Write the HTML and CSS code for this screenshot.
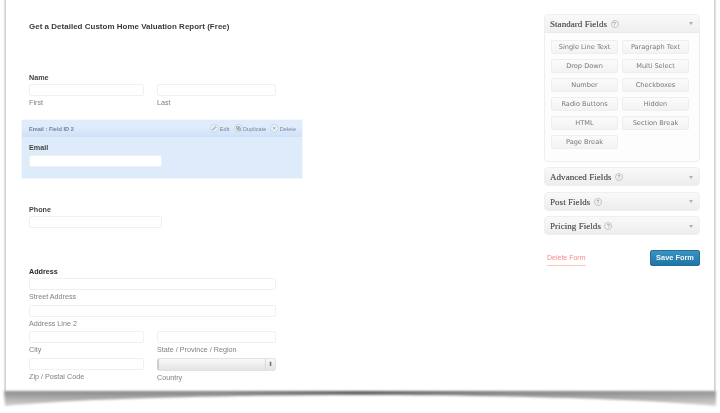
FILE: index.html
```html
<!DOCTYPE html>
<html lang="en">
<head>
<meta charset="utf-8">
<title>Form editor</title>
<link rel="stylesheet" href="styles.css">
</head>
<body>
<div class="sheet">
  <main class="form">
    <h1 class="title">Get a Detailed Custom Home Valuation Report (Free)</h1>
    <section class="field f-name">
      <div class="label">Name</div>
      <div class="pair">
        <div class="half"><div class="input"></div><div class="sub">First</div></div>
        <div class="half"><div class="input"></div><div class="sub">Last</div></div>
      </div>
    </section>
    <section class="selected">
      <div class="sel-head">
        <span class="sel-title">Email : Field ID 2</span>
        <span class="actions">
          <span class="action"><svg class="ai" viewBox="0 0 10 10"><circle cx="5" cy="5" r="4.5"/><path class="m" d="M3 7l.4-1.4L6.2 2.8l1 1L4.4 6.6z"/></svg>Edit</span>
          <span class="action"><svg class="ai" viewBox="0 0 10 10"><circle cx="5" cy="5" r="4.5"/><path class="m" d="M3 3h3v3H3zM4.5 4.5h3v3h-3z"/></svg>Duplicate</span>
          <span class="action"><svg class="ai" viewBox="0 0 10 10"><circle cx="5" cy="5" r="4.5"/><path class="m" d="M3.4 3.4l3.2 3.2M6.6 3.4L3.4 6.6"/></svg>Delete</span>
        </span>
      </div>
      <div class="sel-body">
        <div class="label">Email</div>
        <div class="input w-133"></div>
      </div>
    </section>
    <section class="field f-phone">
      <div class="label">Phone</div>
      <div class="input w-133"></div>
    </section>
    <section class="field f-address">
      <div class="label strong">Address</div>
      <div class="input full"></div>
      <div class="sub">Street Address</div>
      <div class="input full"></div>
      <div class="sub">Address Line 2</div>
      <div class="pair">
        <div class="half"><div class="input"></div><div class="sub">City</div></div>
        <div class="half"><div class="input"></div><div class="sub">State / Province / Region</div></div>
      </div>
      <div class="pair">
        <div class="half"><div class="input"></div><div class="sub">Zip / Postal Code</div></div>
        <div class="half"><div class="select"><span class="arrows">⬍</span></div><div class="sub">Country</div></div>
      </div>
    </section>
  </main>
  <aside class="side">
    <div class="panel open">
      <div class="p-head"><span class="p-title">Standard Fields</span><span class="help">?</span><span class="caret"></span></div>
      <div class="btns">
        <span class="btn">Single Line Text</span><span class="btn">Paragraph Text</span>
        <span class="btn">Drop Down</span><span class="btn">Multi Select</span>
        <span class="btn">Number</span><span class="btn">Checkboxes</span>
        <span class="btn">Radio Buttons</span><span class="btn">Hidden</span>
        <span class="btn">HTML</span><span class="btn">Section Break</span>
        <span class="btn">Page Break</span>
      </div>
    </div>
    <div class="panel"><div class="p-head"><span class="p-title">Advanced Fields</span><span class="help">?</span><span class="caret"></span></div></div>
    <div class="panel"><div class="p-head"><span class="p-title">Post Fields</span><span class="help">?</span><span class="caret"></span></div></div>
    <div class="panel"><div class="p-head"><span class="p-title">Pricing Fields</span><span class="help">?</span><span class="caret"></span></div></div>
    <div class="foot">
      <span class="del">Delete Form</span>
      <span class="save">Save Form</span>
    </div>
  </aside>
</div>
<svg class="shadow" viewBox="0 0 720 22" preserveAspectRatio="none" aria-hidden="true">
  <defs>
    <linearGradient id="sg" x1="0" x2="1" y1="0" y2="0">
      <stop offset="0" stop-color="#8c8c8c"/>
      <stop offset=".3" stop-color="#808080"/>
      <stop offset=".5" stop-color="#555"/>
      <stop offset=".72" stop-color="#808080"/>
      <stop offset="1" stop-color="#929292"/>
    </linearGradient>
    <linearGradient id="sv" gradientUnits="userSpaceOnUse" x1="0" x2="0" y1="0" y2="16">
      <stop offset="0" stop-color="#fff"/>
      <stop offset="1" stop-color="#555"/>
    </linearGradient>
    <mask id="sm"><rect width="720" height="22" fill="url(#sv)"/></mask>
  </defs>
  <path d="M4 0H716V15C650 8 500 4 360 4C220 4 70 8 5 15Z" fill="url(#sg)" mask="url(#sm)"/>
</svg>
</body>
</html>
```
FILE: styles.css
```css
html, body { margin: 0; padding: 0; background: #fff; }
body {
  width: 720px;
  height: 413px;
  overflow: hidden;
  position: relative;
  font-family: "Liberation Sans", Arial, sans-serif;
}
.sheet {
  width: 710px;
  height: 391px;
  margin-left: 5px;
  background: #fff;
  display: flex;
  box-sizing: border-box;
  border-left: 1px solid #d2d2d2;
  border-right: 1px solid #d2d2d2;
  box-shadow: -1px 0 1px #e2e2e2, 1px 0 1px #e2e2e2;
  filter: blur(.5px);
}
.form {
  width: 538px;
  height: 361px;
  overflow: hidden;
  flex: none;
  padding: 21px 0 0 23px;
}
.title { margin: 0; font-size: 7.95px; line-height: 11px; font-weight: bold; color: #3a3a3a; letter-spacing: .04px; }
.label { font-size: 7.2px; line-height: 10px; font-weight: bold; color: #444; height: 11px; }
.strong { color: #2c2c2c; height: 11px; }
.sub { font-size: 7.2px; line-height: 10px; color: #808080; margin-top: 2px; height: 11px; }
.input {
  height: 12px;
  width: 115px;
  box-sizing: border-box;
  background: #fff;
  border: 1px solid #f0f0f0;
  border-radius: 2px;
}
.w-133 { width: 133px; }
.full { width: 246.5px; }
.pair { display: flex; gap: 13px; }
.half { width: 115px; }
.half + .half { width: 118.5px; }
.half + .half .input { width: 118.5px; }
.f-name { margin-top: 41px; }
.selected {
  width: 280px;
  height: 58px;
  margin: 10.5px 0 0 -7px;
  background: #deebfb;
  box-shadow: 0 0 1px #c5d8ef;
}
.sel-head {
  height: 17px;
  box-sizing: border-box;
  padding: 1px 6px 0 7px;
  display: flex;
  justify-content: space-between;
  align-items: center;
  background: linear-gradient(#e0ecfc 40%, #cfe0f7);
  font-size: 5.6px;
  color: #76869a;
}
.sel-title { font-weight: bold; color: #738397; }
.actions { display: flex; gap: 4px; }
.action { display: flex; align-items: center; gap: 1px; }
.ai { width: 8.5px; height: 8.5px; }
.ai circle { fill: #f0f3f7; stroke: #c0cad5; stroke-width: .8; }
.ai .m { fill: none; stroke: #8a95a1; stroke-width: .9; }
.sel-body { padding: 6px 7px 0; }
.sel-body .label { height: 12.5px; }
.f-phone { margin-top: 27px; }
.f-address { margin-top: 39.5px; }
.f-address .sub { height: 12.5px; }
.select {
  width: 118.5px;
  height: 13px;
  box-sizing: border-box;
  border: 1px solid #e2e2e2;
  border-left: 2px solid #cfcfcf;
  border-radius: 3px;
  background: linear-gradient(#f8f8f8, #e4e4e4);
  position: relative;
}
.arrows {
  position: absolute;
  right: 0;
  top: 0;
  bottom: 0;
  width: 9px;
  border-left: 1px solid #dadada;
  font-size: 6px;
  line-height: 11px;
  text-align: center;
  color: #777;
}
.select + .sub { margin-top: 2px; }
.side { width: 156px; padding: 14px 0 0 0; margin-left: -23px; }
.panel {
  width: 156px;
  height: 19px;
  box-sizing: border-box;
  border: 1px solid #efefef;
  border-radius: 4px;
  background: linear-gradient(#f9f9f9, #ededed);
  margin-bottom: 5.5px;
}
.panel.open { height: 148px; background: #fdfdfd; margin-bottom: 5px; }
.p-head {
  height: 18px;
  box-sizing: border-box;
  display: flex;
  align-items: center;
  padding: 0 6px 0 5px;
  gap: 3.5px;
  font-family: "Liberation Serif", "DejaVu Serif", serif;
  font-size: 9px;
  color: #5a5a5a;
}
.open .p-head { background: linear-gradient(#f9f9f9, #efefef); border-bottom: 1px solid #ebebeb; border-radius: 3px 3px 0 0; }
.p-title { letter-spacing: .05px; text-shadow: 0 0 .4px #777; }
.help {
  width: 8px;
  height: 8px;
  box-sizing: border-box;
  border: 1px solid #c4c4c4;
  border-radius: 50%;
  font: 5px/6px "Liberation Sans", sans-serif;
  text-align: center;
  color: #888;
  background: #f3f3f3;
}
.caret {
  margin-left: auto;
  width: 0;
  height: 0;
  border: 2px solid transparent;
  border-top: 3px solid #b0b0b0;
  border-bottom: 0;
}
.btns {
  display: grid;
  grid-template-columns: 67px 67px;
  grid-auto-rows: 14px;
  gap: 5px 4px;
  padding: 7px 6px;
}
.btn {
  box-sizing: border-box;
  border: 1px solid #eeeeee;
  border-radius: 2px;
  background: linear-gradient(#fbfbfb, #f3f3f3);
  font: 6.6px/12px "DejaVu Sans", Verdana, sans-serif;
  color: #777;
  text-align: center;
  white-space: nowrap;
}
.foot {
  display: flex;
  justify-content: space-between;
  align-items: flex-start;
  margin-top: 15px;
}
.del {
  margin: 4px 0 0 3px;
  padding-bottom: 3px;
  font-size: 7px;
  line-height: 8px;
  color: #f68a8a;
  border-bottom: 1px solid #fac6c6;
}
.save {
  width: 50px;
  height: 16px;
  box-sizing: border-box;
  border: 1px solid #256f9b;
  border-radius: 2px;
  background: linear-gradient(#3a93c2, #1f75a6);
  color: #f2f8fb;
  font-size: 7.4px;
  font-weight: bold;
  line-height: 14px;
  text-align: center;
}
.shadow {
  position: absolute;
  left: 0;
  top: 391px;
  width: 720px;
  height: 22px;
  filter: blur(.8px);
}
```
